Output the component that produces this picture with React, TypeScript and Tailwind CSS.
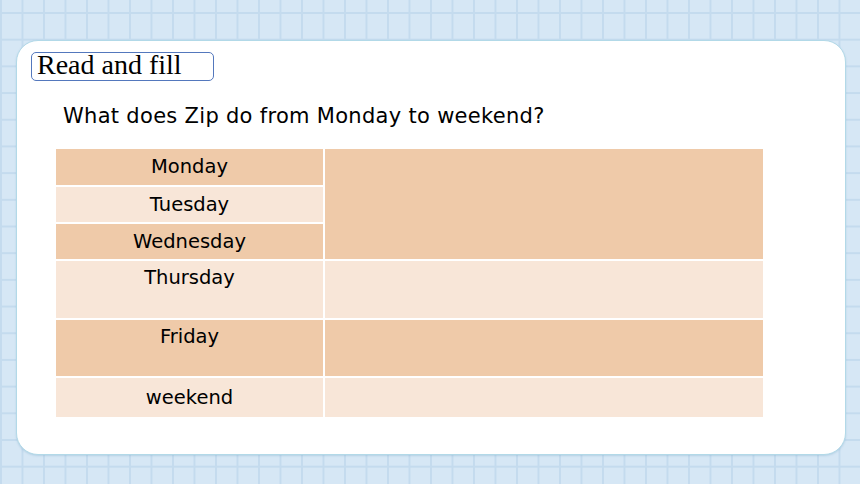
export default function App() {
  const dark = "bg-[#efcaa9]";
  const light = "bg-[#f8e6d8]";
  return (
    <div className="relative h-[484px] w-[860px] overflow-hidden bg-[#d6e7f5] [background-image:linear-gradient(to_right,#c4dbee_2px,transparent_2px),linear-gradient(to_bottom,#c4dbee_2px,transparent_2px)] [background-size:21.5px_26.7px] [background-position:0px_12px] pl-[16px] pt-[40px]">
      <div className="flex h-[415px] w-[830px] flex-col rounded-[22px] border border-[#b2d9e8] bg-white pl-[14px] pt-[11px] shadow-[0_1px_2px_rgba(120,170,200,0.35)]">
        <div className="flex h-[29px] w-[183px] items-start rounded-[5px] border border-[#5478bd] pl-[5px]">
          <span className="font-['Liberation_Serif',serif] text-[28px] leading-[23px] text-black">Read and fill</span>
        </div>
        <div className="mt-[21px] pl-[32px] font-['DejaVu_Sans',sans-serif] text-[21px] leading-[28px] tracking-[0.3px] text-black">
          What does Zip do from Monday to weekend?
        </div>
        <div className="ml-[25px] mt-[19px] grid w-[707px] grid-cols-[267px_438px] grid-rows-[36px_35px_35px_57px_56px_39px] gap-[2px] bg-white font-['DejaVu_Sans',sans-serif] text-[19.5px] text-black">
          <div className={`${dark} flex items-center justify-center`}>Monday</div>
          <div className={`${dark} row-span-3`}></div>
          <div className={`${light} flex items-center justify-center`}>Tuesday</div>
          <div className={`${dark} flex items-center justify-center`}>Wednesday</div>
          <div className={`${light} flex items-start justify-center pt-[2px]`}>Thursday</div>
          <div className={light}></div>
          <div className={`${dark} flex items-start justify-center pt-[2px]`}>Friday</div>
          <div className={dark}></div>
          <div className={`${light} flex items-center justify-center`}>weekend</div>
          <div className={light}></div>
        </div>
      </div>
    </div>
  );
}
